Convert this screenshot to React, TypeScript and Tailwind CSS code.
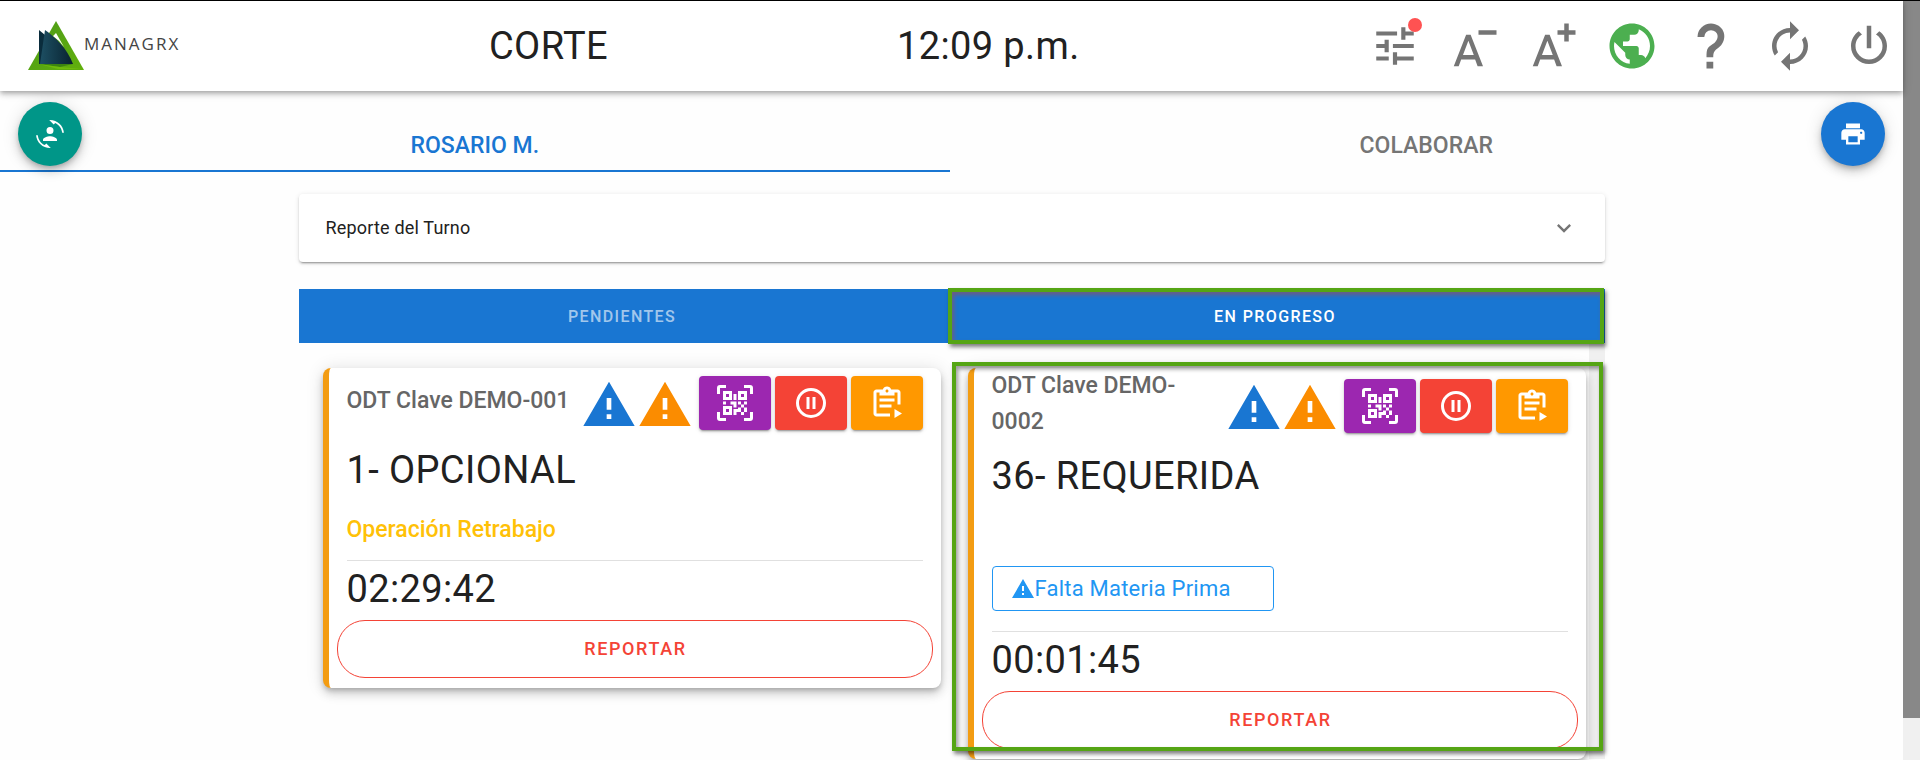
import type { ReactNode } from 'react'
import { MdAutorenew, MdPrint, MdPublic, MdTune } from 'react-icons/md'
import { clsx } from 'clsx'

interface Order {
  clave: string
  operation: string
  rework?: string
  missing?: string
  elapsed: string
}

const ORDERS: Order[] = [
  {
    clave: 'ODT Clave DEMO-001',
    operation: '1- OPCIONAL',
    rework: 'Operación Retrabajo',
    elapsed: '02:29:42',
  },
  {
    clave: 'ODT Clave DEMO-0002',
    operation: '36- REQUERIDA',
    missing: 'Falta Materia Prima',
    elapsed: '00:01:45',
  },
]

const ICONS = {
  alert: 'M13 14H11V9H13M13 18H11V16H13M1 21H23L12 2L1 21Z',
  fontMinus:
    'M8.5,7H10.5L16,21H13.6L12.5,18H6.3L5.2,21H3L8.5,7M7.1,16H11.9L9.5,9.7L7.1,16M22,5V7H14V5H22Z',
  fontPlus:
    'M8.5 7H10.5L16 21H13.6L12.5 18H6.3L5.2 21H3L8.5 7M7.1 16H11.9L9.5 9.7L7.1 16M22 5V7H19V10H17V7H14V5H17V2H19V5H22Z',
  help: 'M10,19H13V22H10V19M12,2C17.35,2.22 19.68,7.62 16.5,11.67C15.67,12.67 14.33,13.33 13.67,14.17C13,15 13,16 13,17H10C10,15.33 10,13.92 10.67,12.92C11.33,11.92 12.67,11.33 13.5,10.67C15.92,8.43 15.32,5.26 12,5A3,3 0 0,0 9,8H6A6,6 0 0,1 12,2Z',
  power:
    'M16.56,5.44L15.11,6.89C16.84,7.94 18,9.83 18,12A6,6 0 0,1 12,18A6,6 0 0,1 6,12C6,9.83 7.16,7.94 8.88,6.88L7.44,5.44C5.36,6.88 4,9.28 4,12A8,8 0 0,0 12,20A8,8 0 0,0 20,12C20,9.28 18.64,6.88 16.56,5.44M13,3H11V13H13',
  accountConvert:
    'M7.5,21.5L8.85,20.16L12.66,23.97L12,24C5.71,24 0.56,19.16 0.05,13H1.55C1.91,16.76 4.25,19.94 7.5,21.5M16.5,2.5L15.15,3.84L11.34,0.03L12,0C18.29,0 23.44,4.84 23.95,11H22.45C22.09,7.24 19.75,4.07 16.5,2.5M6,17C6,15 10,13.9 12,13.9C14,13.9 18,15 18,17V18H6V17M15,9A3,3 0 0,1 12,12A3,3 0 0,1 9,9A3,3 0 0,1 12,6A3,3 0 0,1 15,9Z',
  chevronDown: 'M7.41,8.58L12,13.17L16.59,8.58L18,10L12,16L6,10L7.41,8.58Z',
  pause:
    'M13,16V8H15V16H13M9,16V8H11V16H9M12,2A10,10 0 0,1 22,12A10,10 0 0,1 12,22A10,10 0 0,1 2,12A10,10 0 0,1 12,2M12,4A8,8 0 0,0 4,12A8,8 0 0,0 12,20A8,8 0 0,0 20,12A8,8 0 0,0 12,4Z',
  qrScan:
    'M4,4H10V10H4V4M20,4V10H14V4H20M14,15H16V13H14V11H16V13H18V11H20V13H18V15H20V18H18V20H16V18H13V20H11V16H14V15M16,15V18H18V15H16M4,20V14H10V20H4M6,6V8H8V6H6M16,6V8H18V6H16M6,16V18H8V16H6M4,11H6V13H4V11M9,11H13V15H11V13H9V11M11,6H13V10H11V6M2,2V6H0V2A2,2 0 0,1 2,0H6V2H2M22,0A2,2 0 0,1 24,2V6H22V2H18V0H22M2,18V22H6V24H2A2,2 0 0,1 0,22V18H2M22,22V18H24V22A2,2 0 0,1 22,24H18V22H22Z',
  clipboardPlay:
    'M19 3H14.82C14.4 1.84 13.3 1 12 1S9.6 1.84 9.18 3H5C3.9 3 3 3.9 3 5V19C3 20.1 3.9 21 5 21H14V19H5V5H7V7H17V5H19V13H21V5C21 3.9 20.1 3 19 3M12 5C11.45 5 11 4.55 11 4S11.45 3 12 3 13 3.45 13 4 12.55 5 12 5M17 11H7V9H17V11M15 15H7V13H15V15M17 16V22L22 19L17 16Z',
}

function Icon({ name, className }: { name: keyof typeof ICONS; className?: string }) {
  return (
    <svg viewBox="0 0 24 24" fill="currentColor" aria-hidden="true" className={className}>
      <path d={ICONS[name]} />
    </svg>
  )
}

function Logo() {
  return (
    <svg viewBox="0 0 56 50" aria-hidden="true" className="h-[50px] w-14">
      <defs>
        <linearGradient id="leaf" x1="0" y1="0" x2="1" y2="1">
          <stop offset="0" stopColor="#4c9a1a" />
          <stop offset="1" stopColor="#62b00c" />
        </linearGradient>
        <linearGradient id="sheet" x1="0" y1="0" x2="1" y2="0">
          <stop offset="0" stopColor="#1d4f63" />
          <stop offset="1" stopColor="#08222f" />
        </linearGradient>
      </defs>
      <path d="M28 0L56 49H0Z" fill="url(#leaf)" />
      <path d="M11 43L45 43L32 46Z" fill="#3c8410" />
      <path d="M11 43L32 46L54 48H30Z" fill="#7cc80a" opacity=".6" />
      <path d="M11 9L17 14V43H11Z" fill="#0a2c3c" />
      <path d="M17 9C27 16 39 27 45 43H12Z" fill="url(#sheet)" />
      <path d="M25 15L28 12L36 26Q31 19 25 15Z" fill="#fff" />
    </svg>
  )
}

function HeaderButton({ label, className, children }: { label: string; className?: string; children: ReactNode }) {
  return (
    <button
      type="button"
      aria-label={label}
      className={clsx('relative flex size-[54px] items-center justify-center', className)}
    >
      {children}
    </button>
  )
}

function Header() {
  return (
    <header className="relative z-10 flex h-[91px] items-center border-t border-black bg-white pr-[7px] shadow-[0_2px_4px_-1px_rgba(0,0,0,.2),0_4px_5px_0_rgba(0,0,0,.14),0_1px_10px_0_rgba(0,0,0,.12)]">
      <div className="flex w-[489px] items-center pl-7">
        <Logo />
        <span className="pb-1 font-['Open_Sans',sans-serif] text-[17px] leading-6 font-medium tracking-[2px] text-[#444]">
          MANAGRX
        </span>
      </div>
      <h1 className="w-[408px] text-[38px] leading-none tracking-[0.01em]">CORTE</h1>
      <time className="flex-1 text-[38px] leading-none tracking-[0.01em]">12:09 p.m.</time>
      <nav className="flex items-center gap-[25px] text-[#757575]">
        <HeaderButton label="Ajustes">
          <MdTune className="size-[50px]" />
          <span className="absolute -top-[1px] right-0 size-3.5 rounded-full bg-[#ff5252]" />
        </HeaderButton>
        <HeaderButton label="Reducir texto">
          <Icon name="fontMinus" className="size-full" />
        </HeaderButton>
        <HeaderButton label="Aumentar texto">
          <Icon name="fontPlus" className="size-full" />
        </HeaderButton>
        <HeaderButton label="Idioma" className="text-[#4caf50]">
          <MdPublic className="size-full" />
        </HeaderButton>
        <HeaderButton label="Ayuda">
          <Icon name="help" className="size-full" />
        </HeaderButton>
        <HeaderButton label="Actualizar">
          <MdAutorenew className="size-full" />
        </HeaderButton>
        <HeaderButton label="Salir">
          <Icon name="power" className="size-full" />
        </HeaderButton>
      </nav>
    </header>
  )
}

function ActionButton({ label, className, children }: { label: string; className: string; children: ReactNode }) {
  return (
    <button
      type="button"
      aria-label={label}
      className={clsx(
        'flex h-[54px] w-[72px] items-center justify-center rounded text-white',
        'shadow-[0_3px_1px_-2px_rgba(0,0,0,.2),0_2px_2px_0_rgba(0,0,0,.14),0_1px_5px_0_rgba(0,0,0,.12)]',
        className
      )}
    >
      {children}
    </button>
  )
}

function OrderCard({ order }: { order: Order }) {
  return (
    <article className="rounded-lg border-l-[6px] border-[#f39c12] bg-white pb-2.5 shadow-[0_3px_5px_-1px_rgba(0,0,0,.2),0_6px_10px_0_rgba(0,0,0,.14),0_1px_18px_0_rgba(0,0,0,.12)]">
      <div className="px-[18px]">
        <div className="flex min-h-[66px] items-center justify-between">
          <h2 className="flex-1 pr-2 text-[23px] leading-9 font-medium text-[#666]">{order.clave}</h2>
          <div className="flex items-center gap-1 pt-1">
            <div className="flex pt-1 pr-0.5">
              <Icon name="alert" className="size-14 text-[#1976d2]" />
              <Icon name="alert" className="size-14 text-[#fb8c00]" />
            </div>
            <ActionButton label="Escanear código" className="bg-[#9c27b0]">
              <Icon name="qrScan" className="size-9" />
            </ActionButton>
            <ActionButton label="Pausar" className="bg-[#f44336]">
              <Icon name="pause" className="size-9" />
            </ActionButton>
            <ActionButton label="Instrucciones" className="bg-[#ff9800]">
              <Icon name="clipboardPlay" className="size-9" />
            </ActionButton>
          </div>
        </div>
        <p className="pt-2 text-[38px] leading-[56px] tracking-[0.01em]">{order.operation}</p>
        {order.rework && (
          <p className="pt-3.5 text-[23px] leading-9 font-medium text-[#ffc107]">{order.rework}</p>
        )}
        {order.missing && (
          <div className="mt-[62px] mb-5 flex h-[45px] w-[282px] items-center rounded border border-[#2196f3] pl-[18px] text-[22px] tracking-[0.01em] text-[#2196f3]">
            <Icon name="alert" className="size-6" />
            {order.missing}
          </div>
        )}
        <hr className="mt-3 border-[#e0e0e0]" />
        <p className="text-[38px] leading-[56px] tracking-[0.01em]">{order.elapsed}</p>
      </div>
      <div className="px-2">
        <button
          type="button"
          className="mt-[3px] h-[58px] w-full rounded-[28px] border border-[#f44336] pl-0.5 text-lg font-medium tracking-[1.6px] text-[#f44336]"
        >
          REPORTAR
        </button>
      </div>
    </article>
  )
}

export default function App() {
  return (
    <div className="flex h-screen overflow-hidden bg-[#fefefe] font-[Roboto,sans-serif] text-[#212121]">
      <div className="min-w-0 flex-1">
        <Header />
        <div className="relative">
          <div role="tablist" className="grid h-[81px] grid-cols-2 pr-1 text-[23px] font-medium">
            <button
              type="button"
              role="tab"
              aria-selected="true"
              className="border-b-2 border-[#1976d2] pt-8 text-[#1976d2]"
            >
              ROSARIO M.
            </button>
            <button
              type="button"
              role="tab"
              aria-selected="false"
              className="border-b-2 border-transparent pt-8 pl-1 text-[#757575]"
            >
              COLABORAR
            </button>
          </div>
          <button
            type="button"
            aria-label="Cambiar usuario"
            className="absolute top-[11px] left-[18px] flex size-16 items-center justify-center rounded-full bg-[#009688] text-white shadow-[0_3px_5px_-1px_rgba(0,0,0,.2),0_6px_10px_0_rgba(0,0,0,.14),0_1px_18px_0_rgba(0,0,0,.12)]"
          >
            <Icon name="accountConvert" className="size-7" />
          </button>
          <button
            type="button"
            aria-label="Imprimir"
            className="absolute top-[11px] right-[18px] flex size-16 items-center justify-center rounded-full bg-[#1976d2] text-white shadow-[0_3px_5px_-1px_rgba(0,0,0,.2),0_6px_10px_0_rgba(0,0,0,.14),0_1px_18px_0_rgba(0,0,0,.12)]"
          >
            <MdPrint className="size-7" />
          </button>
        </div>

        <main className="mx-auto w-full max-w-[1306px] pt-[22px]">
          <button
            type="button"
            aria-expanded="false"
            className="flex h-[68px] w-full items-center justify-between rounded bg-white pr-[27px] pl-[27px] text-lg tracking-[0.01em] shadow-[0_3px_1px_-2px_rgba(0,0,0,.2),0_2px_2px_0_rgba(0,0,0,.14),0_1px_5px_0_rgba(0,0,0,.12)]"
          >
            Reporte del Turno
            <Icon name="chevronDown" className="size-7 text-[#757575]" />
          </button>

          <div
            role="tablist"
            className="mt-[27px] grid h-[54px] grid-cols-2 bg-[#1976d2] text-base font-medium tracking-[1.4px] text-white"
          >
            <button type="button" role="tab" aria-selected="false" className="pt-0.5 pr-1.5 text-white/60">
              PENDIENTES
            </button>
            <div className="relative flex">
              <button type="button" role="tab" aria-selected="true" className="flex-1 pt-0.5 pr-1.5">
                EN PROGRESO
              </button>
              <span className="pointer-events-none absolute -inset-y-px right-px -left-1 z-10 border-4 border-[#55a514] shadow-[2px_3px_4px_rgba(0,0,0,.5),inset_2px_3px_4px_rgba(120,90,120,.9)]" />
            </div>
          </div>

          <div className="flex">
            <section className="grid flex-1 grid-cols-2 items-start pt-[25px]">
              {ORDERS.map((order, index) => (
                <div key={order.clave} className="relative pr-[3px] pl-6">
                  <OrderCard order={order} />
                  {index === 1 && (
                    <span className="pointer-events-none absolute -top-1.5 -right-3.5 bottom-2 left-2 border-4 border-[#55a514] shadow-[2px_3px_4px_rgba(0,0,0,.5),inset_2px_3px_4px_rgba(0,0,0,.4)]" />
                  )}
                </div>
              ))}
            </section>
            <div className="w-4 bg-[#f0f0f0]" />
          </div>
        </main>
      </div>
      <div className="w-[17px] bg-[#f0f0f0]">
        <div className="h-[94.5%] border-t border-black bg-[#888]" />
      </div>
    </div>
  )
}
